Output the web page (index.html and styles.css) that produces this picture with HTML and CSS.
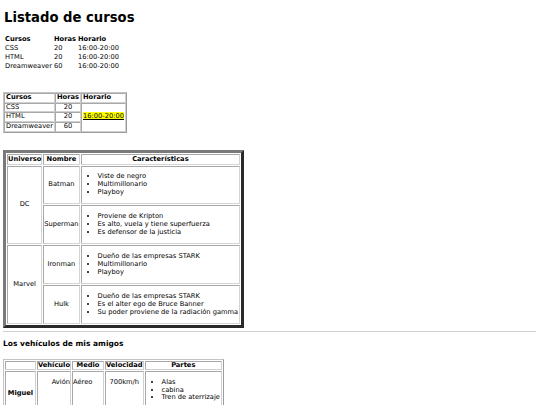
FILE: index.html
```html
<!DOCTYPE html>
<html lang="es">
<head>
<meta charset="utf-8">
<title>Listado de cursos</title>
<link rel="stylesheet" href="styles.css">
</head>
<body>
<h1 class="title">Listado de cursos</h1>

<table class="plain">
  <tr><th>Cursos</th><th>Horas</th><th>Horario</th></tr>
  <tr><td>CSS</td><td>20</td><td>16:00-20:00</td></tr>
  <tr><td>HTML</td><td>20</td><td>16:00-20:00</td></tr>
  <tr><td>Dreamweaver</td><td>60</td><td>16:00-20:00</td></tr>
</table>

<table class="grid">
  <tr><th>Cursos</th><th>Horas</th><th>Horario</th></tr>
  <tr><td>CSS</td><td class="center">20</td><td rowspan="3" class="mid"><mark class="hl">16:00-20:00</mark></td></tr>
  <tr><td>HTML</td><td class="center">20</td></tr>
  <tr><td>Dreamweaver</td><td class="center">60</td></tr>
</table>

<table class="heroes">
  <tr><th>Universo</th><th>Nombre</th><th>Características</th></tr>
  <tr>
    <td rowspan="2" class="center">DC</td>
    <td class="center">Batman</td>
    <td><ul class="list"><li>Viste de negro</li><li>Multimillonario</li><li>Playboy</li></ul></td>
  </tr>
  <tr>
    <td class="center">Superman</td>
    <td><ul class="list"><li>Proviene de Kripton</li><li>Es alto, vuela y tiene superfuerza</li><li>Es defensor de la justicia</li></ul></td>
  </tr>
  <tr>
    <td rowspan="2" class="center">Marvel</td>
    <td class="center">Ironman</td>
    <td><ul class="list"><li>Dueño de las empresas STARK</li><li>Multimillonario</li><li>Playboy</li></ul></td>
  </tr>
  <tr>
    <td class="center">Hulk</td>
    <td><ul class="list"><li>Dueño de las empresas STARK</li><li>Es el alter ego de Bruce Banner</li><li>Su poder proviene de la radiación gamma</li></ul></td>
  </tr>
</table>

<hr class="rule">

<h3 class="subtitle">Los vehículos de mis amigos</h3>

<table class="cars">
  <tr><th class="first"></th><th>Vehículo</th><th class="medio">Medio</th><th class="vel">Velocidad</th><th>Partes</th></tr>
  <tr class="base">
    <th class="owner">Miguel</th>
    <td class="right">Avión</td>
    <td>Aéreo</td>
    <td class="center">700km/h</td>
    <td><ul class="list"><li>Alas</li><li>cabina</li><li>Tren de aterrizaje</li></ul></td>
  </tr>
</table>
</body>
</html>
```

FILE: styles.css
```css
html, body {
  background: #fff;
}
body {
  margin: 0 4px 0 3px;
  font-family: "DejaVu Sans", Verdana, sans-serif;
  font-size: 6.7px;
  line-height: 7.7px;
  color: #000;
}
.title {
  font-size: 13.2px;
  line-height: 15px;
  font-weight: bold;
  margin: 10px 0 0 1px;
}
table {
  font-size: 6.7px;
  line-height: 7.7px;
}
th {
  font-weight: bold;
}
.center { text-align: center; }
.right { text-align: right; }
.mid { vertical-align: middle; }

/* table 1 */
.plain {
  margin: 10.5px 0 0 1px;
  border-collapse: separate;
  border-spacing: 0;
}
.plain th, .plain td {
  text-align: left;
  padding: 0.65px 1px;
}

/* table 2 */
.grid {
  margin-top: 20.5px;
  border-collapse: separate;
  border-spacing: 0;
  border: 1px solid;
  border-color: #c4c4c4 #9c9c9c #9c9c9c #c4c4c4;
}
.grid th, .grid td {
  text-align: left;
  padding: 0 1px;
  border: 1px solid;
  border-color: #a8a8a8 #d0d0d0 #d0d0d0 #a8a8a8;
}
.grid td.center { text-align: center; }
.hl {
  background: #ffff00;
  color: #000;
  text-decoration: underline;
}

/* table 3 */
.heroes {
  margin-top: 17.5px;
  border-collapse: separate;
  border-spacing: 1px;
  border: 3px solid;
  border-color: #7a7a7a #2a2a2a #2a2a2a #7a7a7a;
}
.heroes th, .heroes td {
  padding: 0.3px 0;
  border: 1px solid;
  border-color: #a8a8a8 #d4d4d4 #d4d4d4 #a8a8a8;
  vertical-align: middle;
}
.heroes th {
  text-align: center;
}
.list {
  margin: 6.6px 0;
  padding-left: 16px;
  padding-right: 1px;
}

.rule {
  margin: 3px 0 0;
  border: 0;
  border-top: 1px solid #cfcfcf;
  height: 0;
}
.subtitle {
  font-size: 7.5px;
  line-height: 9px;
  font-weight: bold;
  margin: 6.5px 0 0;
}

/* table 4 */
.cars {
  margin-top: 11px;
  border-collapse: separate;
  border-spacing: 1.5px;
  border: 1px solid;
  border-color: #c4c4c4 #9c9c9c #9c9c9c #c4c4c4;
}
.cars th, .cars td {
  padding: 0;
  border: 1px solid;
  border-color: #a8a8a8 #d0d0d0 #d0d0d0 #a8a8a8;
}
.cars th {
  text-align: center;
}
.cars .first {
  width: 29px;
}
.cars .medio {
  width: 30px;
}
.cars .vel {
  width: 36px;
}
.cars .base td {
  vertical-align: baseline;
}
.cars .owner {
  vertical-align: middle;
  padding-top: 7px;
}
```
